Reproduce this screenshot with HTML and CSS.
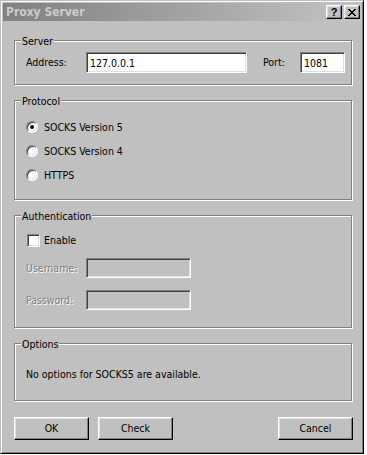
FILE: index.html
```html
<!DOCTYPE html>
<html lang="en">
<head>
    <meta charset="UTF-8">
    <title>Proxy Server</title>
    <link rel="stylesheet" href="styles.css">
</head>
<body>
    <div class="window">
        <div class="titlebar">
            <span class="title">Proxy Server</span>
            <div class="caption-buttons">
                <span class="cap-btn cap-help">?</span>
                <span class="cap-btn cap-close">
                    <svg width="8" height="7" viewBox="0 0 8 7" shape-rendering="crispEdges">
                        <path d="M0 0h2v1H0zM6 0h2v1H6zM1 1h2v1H1zM5 1h2v1H5zM2 2h4v1H2zM3 3h2v1H3zM2 4h4v1H2zM1 5h2v1H1zM5 5h2v1H5zM0 6h2v1H0zM6 6h2v1H6z" fill="#000"/>
                    </svg>
                </span>
            </div>
        </div>

        <div class="dialog">
            <div class="group group-server">
                <span class="group-title">Server</span>
                <div class="row">
                    <span class="lbl">Address:</span>
                    <input class="field field-address" type="text" value="127.0.0.1">
                    <span class="lbl lbl-port">Port:</span>
                    <input class="field field-port" type="text" value="1081">
                </div>
            </div>

            <div class="group group-protocol">
                <span class="group-title">Protocol</span>
                <div class="option"><span class="radio checked"></span>SOCKS Version 5</div>
                <div class="option"><span class="radio"></span>SOCKS Version 4</div>
                <div class="option"><span class="radio"></span>HTTPS</div>
            </div>

            <div class="group group-auth">
                <span class="group-title">Authentication</span>
                <div class="option check-row"><span class="checkbox"></span>Enable</div>
                <div class="row auth-row">
                    <span class="lbl disabled">Username:</span>
                    <input class="field field-auth" type="text" disabled>
                </div>
                <div class="row auth-row">
                    <span class="lbl disabled">Password:</span>
                    <input class="field field-auth" type="password" disabled>
                </div>
            </div>

            <div class="group group-options">
                <span class="group-title">Options</span>
                <p class="note">No options for SOCKS5 are available.</p>
            </div>

            <div class="buttons">
                <button class="btn">OK</button>
                <button class="btn btn-check">Check</button>
                <button class="btn btn-cancel">Cancel</button>
            </div>
        </div>
    </div>
</body>
</html>
```

FILE: styles.css
```css
* {
    box-sizing: border-box;
}
body {
    margin: 0;
    background: #fff;
    font-family: "DejaVu Sans Condensed", "DejaVu Sans", sans-serif;
    font-stretch: condensed;
    font-size: 10.5px;
    line-height: 13px;
    color: #000;
}
.window {
    width: 364px;
    height: 454px;
    background: #c0c0c0;
    border: 1px solid;
    border-color: #c0c0c0 #000 #000 #c0c0c0;
    box-shadow: inset 1px 1px #fff, inset -1px -1px #808080;
    padding: 2px;
}
.titlebar {
    height: 18px;
    display: flex;
    align-items: center;
    justify-content: space-between;
    padding: 0 1px 0 3px;
    background: linear-gradient(to right, #808080, #c4c4c4);
}
.title {
    color: #cccccc;
    font-weight: bold;
    font-size: 12px;
}
.caption-buttons {
    display: flex;
    gap: 2px;
}
.cap-btn {
    width: 16px;
    height: 14px;
    display: flex;
    align-items: center;
    justify-content: center;
    background: #c0c0c0;
    border: 1px solid;
    border-color: #fff #000 #000 #fff;
    box-shadow: inset -1px -1px #808080, inset 1px 1px #dfdfdf;
    font-weight: bold;
    font-size: 11px;
    font-family: "Liberation Sans", sans-serif;
}
.dialog {
    display: flex;
    flex-direction: column;
    gap: 15px;
    padding: 19px 9px 0 11px;
}
.group {
    position: relative;
    border: 1px solid #808080;
    box-shadow: 1px 1px #fff, inset 1px 1px #fff;
    padding-left: 11px;
}
.group-title {
    position: absolute;
    top: -6px;
    left: 6px;
    padding: 0 1px;
    background: #c0c0c0;
}
.group-server {
    height: 45px;
    padding-top: 11px;
}
.group-protocol {
    height: 100px;
    padding-top: 14px;
}
.group-auth {
    height: 113px;
    padding-top: 14px;
}
.group-options {
    height: 58px;
    padding-top: 24px;
}
.row {
    display: flex;
    align-items: center;
}
.lbl {
    width: 60px;
}
.lbl-port {
    width: 37px;
    margin-left: 16px;
}
.disabled {
    color: #808080;
    text-shadow: 1px 1px #fff;
}
.field {
    height: 21px;
    padding: 0 3px;
    font: inherit;
    background: #fff;
    border: 1px solid;
    border-color: #808080 #fff #fff #808080;
    box-shadow: inset 1px 1px #404040, inset -1px -1px #dfdfdf;
    outline: none;
}
.field-address {
    width: 161px;
}
.field-port {
    width: 45px;
}
.field-auth {
    width: 105px;
    height: 20px;
    background: #c0c0c0;
}
.auth-row {
    margin-top: 8px;
}
.auth-row + .auth-row {
    margin-top: 12px;
}
.option {
    height: 24px;
    display: flex;
    align-items: center;
}
.check-row {
    height: 20px;
}
.radio {
    position: relative;
    width: 12px;
    height: 12px;
    margin-right: 6px;
    border-radius: 50%;
    background: #fff;
    border: 1px solid;
    border-color: #808080 #fff #fff #808080;
    box-shadow: inset 1px 1px #404040, inset -1px -1px #dfdfdf;
}
.radio.checked::after {
    content: "";
    position: absolute;
    left: 3px;
    top: 3px;
    width: 4px;
    height: 4px;
    border-radius: 50%;
    background: #000;
}
.checkbox {
    width: 13px;
    height: 13px;
    margin: 0 4px 0 1px;
    background: #fff;
    border: 1px solid;
    border-color: #808080 #fff #fff #808080;
    box-shadow: inset 1px 1px #404040, inset -1px -1px #dfdfdf;
}
.note {
    margin: 0;
}
.buttons {
    display: flex;
    margin: 1px -1px 0 0;
}
.btn {
    width: 75px;
    height: 23px;
    padding: 0;
    font: inherit;
    color: #000;
    background: #c0c0c0;
    border: 1px solid;
    border-color: #fff #000 #000 #fff;
    box-shadow: inset -1px -1px #808080, inset 1px 1px #dfdfdf;
}
.btn-check {
    margin-left: 9px;
}
.btn-cancel {
    margin-left: auto;
}
```
